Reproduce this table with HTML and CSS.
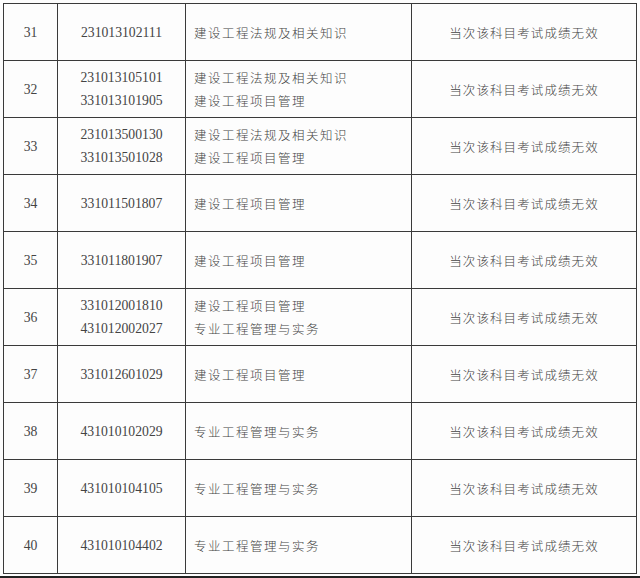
FILE: index.html
```html
<!DOCTYPE html>
<html lang="zh">
<head>
<meta charset="utf-8">
<link rel="stylesheet" href="styles.css">
</head>
<body>
<table class="list">
  <colgroup><col class="c-no"><col class="c-id"><col class="c-sub"><col class="c-res"></colgroup>
  <tr><td class="no">31</td><td class="id">231013102111</td><td class="sub">建设工程法规及相关知识</td><td class="res">当次该科目考试成绩无效</td></tr>
  <tr><td class="no">32</td><td class="id">231013105101<br>331013101905</td><td class="sub">建设工程法规及相关知识<br>建设工程项目管理</td><td class="res">当次该科目考试成绩无效</td></tr>
  <tr><td class="no">33</td><td class="id">231013500130<br>331013501028</td><td class="sub">建设工程法规及相关知识<br>建设工程项目管理</td><td class="res">当次该科目考试成绩无效</td></tr>
  <tr><td class="no">34</td><td class="id">331011501807</td><td class="sub">建设工程项目管理</td><td class="res">当次该科目考试成绩无效</td></tr>
  <tr><td class="no">35</td><td class="id">331011801907</td><td class="sub">建设工程项目管理</td><td class="res">当次该科目考试成绩无效</td></tr>
  <tr><td class="no">36</td><td class="id">331012001810<br>431012002027</td><td class="sub">建设工程项目管理<br>专业工程管理与实务</td><td class="res">当次该科目考试成绩无效</td></tr>
  <tr><td class="no">37</td><td class="id">331012601029</td><td class="sub">建设工程项目管理</td><td class="res">当次该科目考试成绩无效</td></tr>
  <tr><td class="no">38</td><td class="id">431010102029</td><td class="sub">专业工程管理与实务</td><td class="res">当次该科目考试成绩无效</td></tr>
  <tr><td class="no">39</td><td class="id">431010104105</td><td class="sub">专业工程管理与实务</td><td class="res">当次该科目考试成绩无效</td></tr>
  <tr><td class="no">40</td><td class="id">431010104402</td><td class="sub">专业工程管理与实务</td><td class="res">当次该科目考试成绩无效</td></tr>
</table>
<div class="edge"></div>
</body>
</html>
```
FILE: styles.css
```css
html, body {
  margin: 0;
  padding: 0;
  background: #fdfdfd;
  width: 640px;
  height: 578px;
  overflow: hidden;
}
body {
  padding-top: 3px;
  padding-left: 3px;
  box-sizing: border-box;
  font-family: "Liberation Serif", "Noto Sans CJK SC", serif;
  color: #444;
}
.list {
  border-collapse: collapse;
  table-layout: fixed;
  width: 633px;
  border: 1.5px solid #333;
}
.c-no { width: 54px; }
.c-id { width: 128px; }
.c-sub { width: 226px; }
.c-res { width: 225px; }
.list td {
  border: 1px solid #3a3a3a;
  height: 56px;
  padding: 0;
  vertical-align: middle;
  line-height: 23px;
}
.no, .id {
  text-align: center;
  font-family: "Liberation Serif", serif;
  font-size: 13.7px;
}
.sub {
  font-family: "Noto Sans CJK SC", sans-serif;
  font-weight: 300;
  font-size: 12.5px;
  letter-spacing: 1.5px;
  padding-left: 8px !important;
  text-align: left;
}
.res {
  font-family: "Noto Sans CJK SC", sans-serif;
  font-weight: 300;
  font-size: 12.5px;
  letter-spacing: 1.1px;
  text-align: center;
}
.edge {
  height: 2px;
  margin-top: 2px;
  margin-left: -3px;
  width: 640px;
  background: #222;
}
```
